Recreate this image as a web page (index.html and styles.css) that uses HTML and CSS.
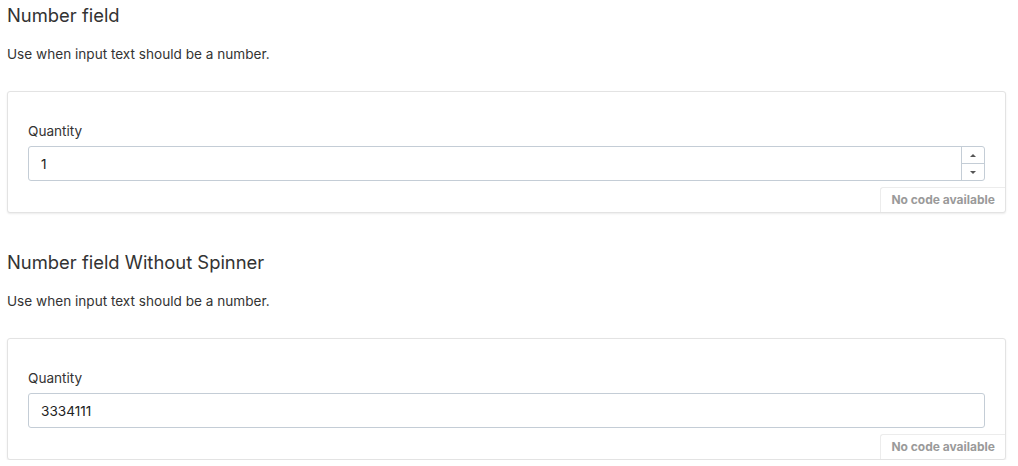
FILE: index.html
```html
<!DOCTYPE html>
<html lang="en">
<head>
<meta charset="utf-8">
<title>Number field</title>
<link rel="stylesheet" href="styles.css">
</head>
<body>
<section class="section">
  <h2 class="section-title">Number field</h2>
  <p class="section-desc">Use when input text should be a number.</p>
  <div class="card">
    <div class="card-body">
      <label class="field-label" for="q1">Quantity</label>
      <div class="field">
        <input class="field-input" id="q1" type="text" value="1">
        <div class="spinner">
          <span class="spin-btn"><span class="arrow-up"></span></span>
          <span class="spin-btn"><span class="arrow-down"></span></span>
        </div>
      </div>
    </div>
    <div class="card-foot"><span class="no-code">No code available</span></div>
  </div>
</section>
<section class="section">
  <h2 class="section-title">Number field Without Spinner</h2>
  <p class="section-desc">Use when input text should be a number.</p>
  <div class="card">
    <div class="card-body">
      <label class="field-label" for="q2">Quantity</label>
      <div class="field">
        <input class="field-input" id="q2" type="text" value="3334111">
      </div>
    </div>
    <div class="card-foot"><span class="no-code">No code available</span></div>
  </div>
</section>
</body>
</html>
```
FILE: styles.css
```css
html, body {
  margin: 0;
  padding: 0;
  background: #ffffff;
}
body {
  font-family: Inter, "Liberation Sans", Arial, sans-serif;
  color: #333333;
  padding: 3px 12px 0 7px;
}
.section {
  margin-bottom: 37px;
}
.section:last-child {
  margin-bottom: 0;
}
.section-title {
  margin: 0;
  font-size: 18.4px;
  font-weight: 400;
  line-height: 24px;
  color: #333333;
}
.section-desc {
  margin: 17px 0 0;
  font-size: 13.6px;
  line-height: 20px;
  color: #333333;
}
.card {
  margin-top: 27px;
  border: 1px solid #e3e3e3;
  border-radius: 3px;
  box-shadow: 0 1px 2px rgba(0, 0, 0, 0.08);
  background: #fff;
}
.card-body {
  padding: 29px 20px 0;
  display: flex;
  flex-direction: column;
}
.field-label {
  font-size: 13.6px;
  line-height: 20px;
  color: #333333;
  margin-bottom: 5px;
}
.field {
  display: flex;
  height: 35px;
  box-sizing: border-box;
  border: 1px solid #c4cdd6;
  border-radius: 3px;
  background: #fff;
}
.field-input {
  flex: 1;
  min-width: 0;
  border: 0;
  outline: 0;
  padding: 0 12px;
  font-family: inherit;
  font-size: 13.6px;
  color: #222;
  background: transparent;
}
.spinner {
  width: 22px;
  display: flex;
  flex-direction: column;
  border-left: 1px solid #c4cdd6;
}
.spin-btn {
  flex: 1;
  display: flex;
  align-items: center;
  justify-content: center;
}
.spin-btn + .spin-btn {
  border-top: 1px solid #c4cdd6;
}
.arrow-up {
  width: 0;
  height: 0;
  border-left: 3px solid transparent;
  border-right: 3px solid transparent;
  border-bottom: 3px solid #555;
}
.arrow-down {
  width: 0;
  height: 0;
  border-left: 3px solid transparent;
  border-right: 3px solid transparent;
  border-top: 3px solid #555;
}
.card-foot {
  display: flex;
  justify-content: flex-end;
  margin-top: 6px;
}
.no-code {
  border-top: 1px solid #ececec;
  border-left: 1px solid #ececec;
  border-top-left-radius: 3px;
  padding: 0 10px;
  height: 24px;
  line-height: 24px;
  font-size: 12px;
  font-weight: 700;
  color: #9a9a9a;
}
```
